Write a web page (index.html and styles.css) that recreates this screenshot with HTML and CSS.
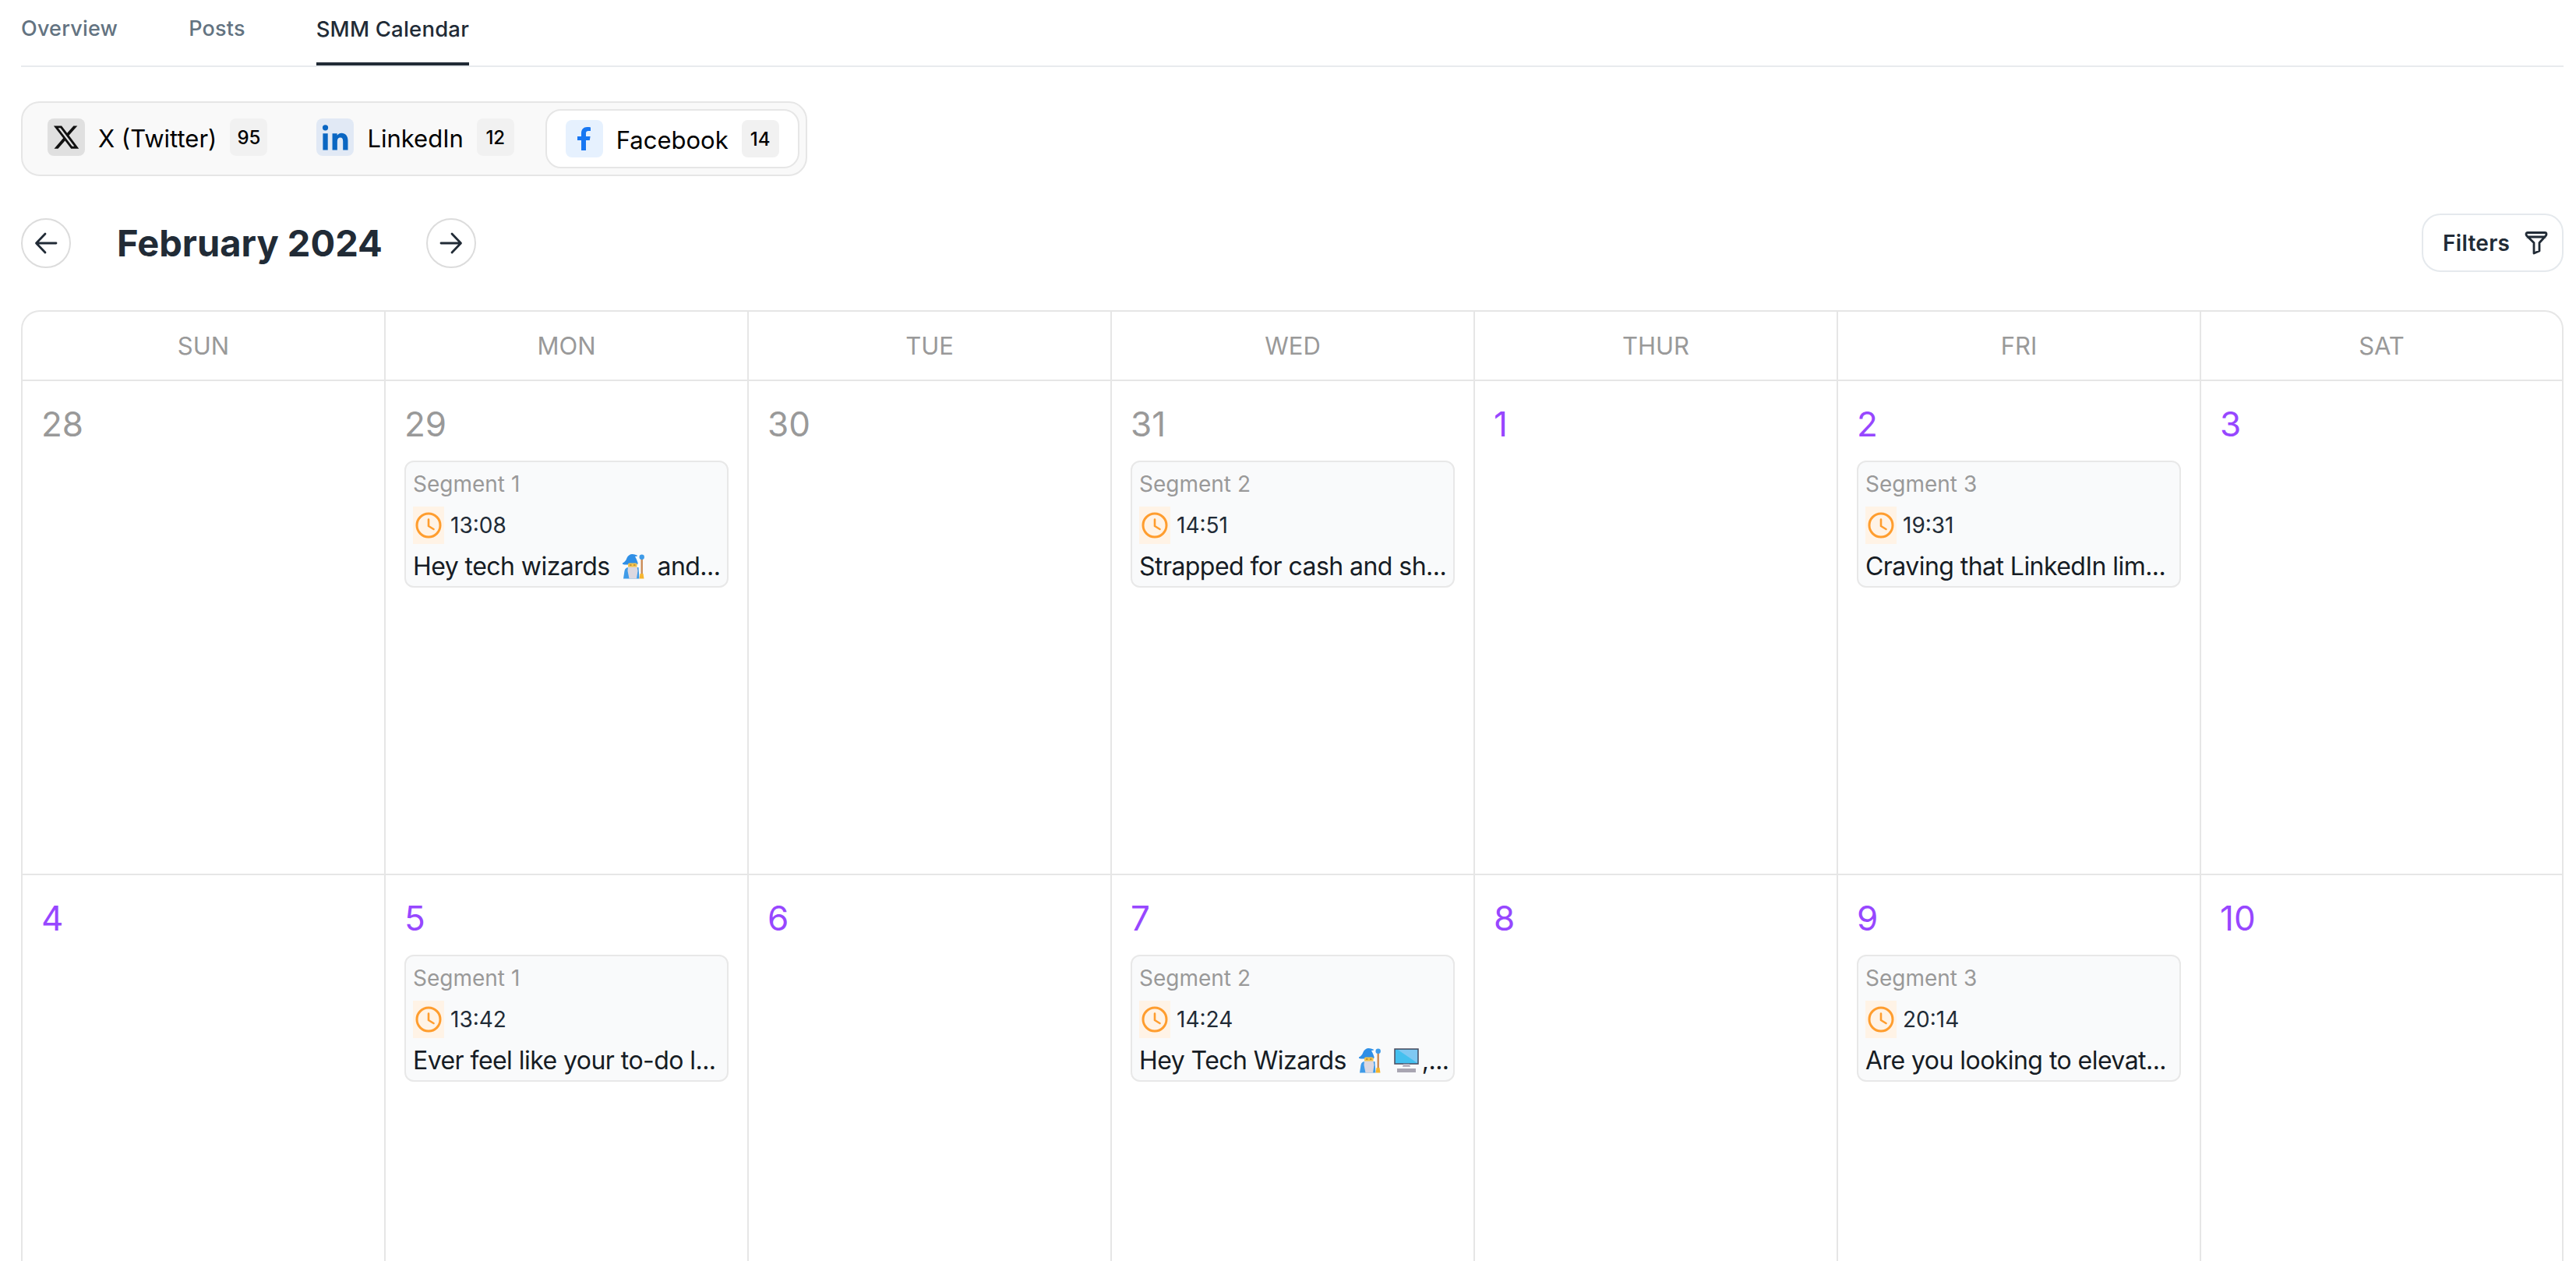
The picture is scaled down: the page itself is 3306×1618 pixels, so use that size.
FILE: index.html
```html
<!DOCTYPE html>
<html lang="en">
<head>
<meta charset="utf-8">
<title>SMM Calendar</title>
<link rel="stylesheet" href="styles.css">
</head>
<body>
<svg class="defs" width="0" height="0" aria-hidden="true">
  <symbol id="clock" viewBox="0 0 34 34"><circle cx="17" cy="17" r="15" fill="none" stroke="#ff9d2e" stroke-width="3"/><path d="M17 9.500V18l6.500 4" fill="none" stroke="#ff9d2e" stroke-width="2.600" stroke-linecap="round" stroke-linejoin="round"/></symbol>
  <symbol id="wizard" viewBox="0 0 28 32">
    <path d="M1 31.500l1.500-10c.5-3 2.500-4.500 5-4.500h13l1 14.500z" fill="#3f9be8"/>
    <path d="M0 11.500c2.500-1 4.500-3.500 5.500-6.500C6.500 2 9.500 0 12.500 0c2.500 0 4 1 6 1.500 1 .3.500 1.500-.5 1.300L16 3c1.500 2.500 2.500 5 3.500 8 .5 1.500-.5 2.500-2 2.500h-14C.5 13.500-1 12.500 0 11.500z" fill="#2f8fe6"/>
    <rect x="7" y="11.500" width="11.500" height="6" rx="1.500" fill="#f5c44e"/>
    <path d="M9 14h2.500M14 14h2.500" stroke="#8a6a30" stroke-width="1"/>
    <path d="M7 16.500h11.500l1 5-1.500 10H8.500l-2-10z" fill="#dcd8e0"/>
    <rect x="23.500" y="6" width="2.400" height="21" fill="#c98a55"/>
    <circle cx="24.700" cy="3.800" r="3.200" fill="#3f9be8"/>
    <path d="M22.500 25h4l1 6.500h-6z" fill="#f5b52e"/>
  </symbol>
  <symbol id="computer" viewBox="0 0 32 32">
    <rect x="1" y="1" width="30" height="19" fill="#44c0ef" stroke="#4a4a5e" stroke-width="1.500"/>
    <path d="M5 2l25 17V2z" fill="#7fc8f2"/>
    <path d="M12 20h8l1 4H11z" fill="#b9b5c2"/>
    <rect x="4" y="26" width="24" height="5" fill="#a9a6b2"/>
  </symbol>
</svg>

<nav class="tabs">
  <a class="tab">Overview</a>
  <a class="tab">Posts</a>
  <a class="tab tab-active">SMM Calendar</a>
</nav>

<div class="channels">
  <div class="channel">
    <span class="chan-icon chan-x"><svg width="36" height="36" viewBox="0 0 24 24"><path fill="#111" d="M18.244 2.250h3.308l-7.227 8.260 8.502 11.240H16.170l-5.214-6.817L4.990 21.750H1.680l7.730-8.835L1.254 2.250H8.080l4.713 6.231zm-1.161 17.520h1.833L7.084 4.126H5.117z"/></svg></span>
    <span class="chan-name">X (Twitter)</span>
    <span class="chan-count">95</span>
  </div>
  <div class="channel">
    <span class="chan-icon chan-in"><svg width="36" height="36" viewBox="0 0 24 24"><path fill="#0a66c2" d="M5.800 8.800H1.600V23h4.200zM3.700 1.500a2.400 2.400 0 1 0 0 4.800 2.400 2.400 0 0 0 0-4.800zM23 15c0-4.200-2.200-6.500-5.400-6.500-1.900 0-3.200 1-3.800 2V8.800H9.700V23h4.200v-7.400c0-1.900.9-3.200 2.600-3.200s2.300 1.200 2.300 3.200V23H23z"/></svg></span>
    <span class="chan-name">LinkedIn</span>
    <span class="chan-count">12</span>
  </div>
  <div class="channel channel-active">
    <span class="chan-icon chan-fb"><svg width="20" height="32" viewBox="0 0 20 32"><path fill="#1877f2" d="M6 31V18H1v-5h5V9c0-5 2.800-8 7.500-8 2 0 3.500.2 4.500.4v4.500h-2.800c-2.300 0-3.200 1.200-3.200 3.200V13h5.600l-.8 5H12v13z"/></svg></span>
    <span class="chan-name">Facebook</span>
    <span class="chan-count">14</span>
  </div>
</div>

<div class="toolbar">
  <button class="round-btn"><svg width="30" height="28" viewBox="0 0 30 28"><path d="M28 14H3M14 2 2.500 14 14 26" fill="none" stroke="#212b36" stroke-width="2.800" stroke-linecap="round" stroke-linejoin="round"/></svg></button>
  <h1 class="month">February 2024</h1>
  <button class="round-btn"><svg width="30" height="28" viewBox="0 0 30 28"><path d="M2 14h25M16 2l11.500 12L16 26" fill="none" stroke="#212b36" stroke-width="2.800" stroke-linecap="round" stroke-linejoin="round"/></svg></button>
  <button class="filters">Filters <svg width="32" height="32" viewBox="0 0 32 32"><path d="M3 4.500C3 3 4 2.500 5 2.500h22c1 0 2 .5 2 2 0 1-.3 1.500-1 2.300L20 15.500V26l-7 3V15.500L4 6.800c-.7-.8-1-1.300-1-2.300zM3.500 8h25" fill="none" stroke="#212b36" stroke-width="2.800" stroke-linejoin="round"/></svg></button>
</div>

<section class="calendar">
  <div class="head">SUN</div><div class="head">MON</div><div class="head">TUE</div><div class="head">WED</div><div class="head">THUR</div><div class="head">FRI</div><div class="head">SAT</div>

  <div class="day"><div class="num muted">28</div></div>
  <div class="day"><div class="num muted">29</div>
    <article class="post"><div class="seg">Segment 1</div><div class="time"><span class="clock"><svg width="34" height="34"><use href="#clock"/></svg></span>13:08</div><div class="text">Hey tech wizards <svg class="emoji" width="28" height="32"><use href="#wizard"/></svg> and...</div></article>
  </div>
  <div class="day"><div class="num muted">30</div></div>
  <div class="day"><div class="num muted">31</div>
    <article class="post"><div class="seg">Segment 2</div><div class="time"><span class="clock"><svg width="34" height="34"><use href="#clock"/></svg></span>14:51</div><div class="text">Strapped for cash and sh...</div></article>
  </div>
  <div class="day"><div class="num">1</div></div>
  <div class="day"><div class="num">2</div>
    <article class="post"><div class="seg">Segment 3</div><div class="time"><span class="clock"><svg width="34" height="34"><use href="#clock"/></svg></span>19:31</div><div class="text">Craving that LinkedIn lim...</div></article>
  </div>
  <div class="day"><div class="num">3</div></div>

  <div class="day"><div class="num">4</div></div>
  <div class="day"><div class="num">5</div>
    <article class="post"><div class="seg">Segment 1</div><div class="time"><span class="clock"><svg width="34" height="34"><use href="#clock"/></svg></span>13:42</div><div class="text">Ever feel like your to-do l...</div></article>
  </div>
  <div class="day"><div class="num">6</div></div>
  <div class="day"><div class="num">7</div>
    <article class="post"><div class="seg">Segment 2</div><div class="time"><span class="clock"><svg width="34" height="34"><use href="#clock"/></svg></span>14:24</div><div class="text">Hey Tech Wizards <svg class="emoji" width="28" height="32"><use href="#wizard"/></svg> <svg class="emoji-tight" width="32" height="32"><use href="#computer"/></svg>,...</div></article>
  </div>
  <div class="day"><div class="num">8</div></div>
  <div class="day"><div class="num">9</div>
    <article class="post"><div class="seg">Segment 3</div><div class="time"><span class="clock"><svg width="34" height="34"><use href="#clock"/></svg></span>20:14</div><div class="text">Are you looking to elevat...</div></article>
  </div>
  <div class="day"><div class="num">10</div></div>
</section>
</body>
</html>
```
FILE: styles.css
```css
* { box-sizing: border-box; }
html, body { height: 100%; }
body {
  margin: 0;
  padding: 0 16px 0 27px;
  background: #fff;
  font-family: Inter, "Liberation Sans", sans-serif;
  color: #161c24;
  overflow: hidden;
}
.defs { position: absolute; }

.tabs {
  display: flex;
  gap: 91px;
  height: 86px;
  border-bottom: 2px solid #e8ebee;
}
.tab {
  height: 84px;
  padding-top: 21px;
  font-size: 27px;
  line-height: 32px;
  font-weight: 500;
  letter-spacing: 0.2px;
  color: #637381;
}
.tab-active {
  font-size: 27.500px;
  color: #212b36;
  border-bottom: 4px solid #212b36;
}

.channels {
  display: inline-flex;
  align-items: center;
  margin-top: 44px;
  height: 96px;
  padding: 0 8px 0 32px;
  background: #f9f9f9;
  border: 2px solid #e6e6e6;
  border-radius: 24px;
}
.channel {
  display: flex;
  align-items: center;
  height: 76px;
  margin-right: 63px;
  margin-bottom: 4px;
}
.channel:nth-child(2) { margin-right: 40px; }
.channel-active {
  margin: 0;
  padding: 0 24px;
  background: #fff;
  border: 2px solid #e6e6e6;
  border-radius: 20px;
}
.chan-icon {
  display: flex;
  align-items: center;
  justify-content: center;
  width: 48px;
  height: 48px;
  border-radius: 8px;
}
.chan-x { background: #e0e0e0; }
.chan-in { background: #e1e9f5; }
.chan-fb { background: #e6f1fe; }
.chan-name {
  margin: 0 17px;
  padding-top: 3px;
  font-size: 31px;
  line-height: 40px;
  color: #000;
}
.chan-count {
  display: flex;
  align-items: center;
  justify-content: center;
  width: 48px;
  height: 48px;
  border-radius: 8px;
  background: #f1f1f1;
  font-size: 24px;
  font-weight: 500;
  color: #000;
}

.toolbar {
  display: flex;
  align-items: center;
  height: 75px;
  margin-top: 48px;
}
.round-btn {
  display: flex;
  align-items: center;
  justify-content: center;
  width: 64px;
  height: 64px;
  padding: 0;
  background: #fff;
  border: 2px solid #dcdcdc;
  border-radius: 50%;
}
.month {
  margin: 0 56px 0 59px;
  font-size: 47px;
  line-height: 60px;
  font-weight: 700;
  color: #212b36;
}
.filters {
  display: flex;
  align-items: center;
  gap: 18px;
  margin-left: auto;
  width: 182px;
  height: 75px;
  padding: 0 0 0 25px;
  background: #fff;
  border: 2px solid #e5e9ed;
  border-radius: 24px;
  font: 600 28px Inter, "Liberation Sans", sans-serif;
  letter-spacing: 0.3px;
  color: #212b36;
}

.calendar {
  display: grid;
  grid-template-columns: repeat(6, 466px) 1fr;
  grid-template-rows: 89px 634px 634px;
  margin-top: 49px;
  border: 2px solid #e6e6e6;
  border-bottom: 0;
  border-radius: 24px 24px 0 0;
}
.head {
  display: flex;
  align-items: center;
  justify-content: center;
  border-right: 2px solid #e6e6e6;
  border-bottom: 2px solid #e6e6e6;
  font-size: 31px;
  color: #999;
}
.day {
  min-width: 0;
  padding: 29px 24px 0;
  border-right: 2px solid #e6e6e6;
  border-bottom: 2px solid #e6e6e6;
}
.head:nth-child(7n), .day:nth-child(7n) { border-right: 0; }
.num {
  font-size: 44px;
  line-height: 52px;
  color: #9747ff;
}
.num.muted { color: #999; }

.post {
  height: 163px;
  margin-top: 21px;
  padding: 12px 9px 0;
  background: #f9fafb;
  border: 2px solid #e8e8e8;
  border-radius: 12px;
}
.seg {
  font-size: 28px;
  line-height: 32px;
  color: #999;
}
.time {
  display: flex;
  align-items: center;
  gap: 8px;
  margin-top: 13px;
  height: 48px;
  font-size: 28px;
  color: #212b36;
}
.clock {
  display: flex;
  align-items: center;
  justify-content: center;
  width: 40px;
  height: 48px;
  background: #fff3e6;
}
.text {
  margin-top: 7px;
  font-size: 32px;
  line-height: 44px;
  letter-spacing: -0.55px;
  white-space: nowrap;
  color: #161c24;
}
.emoji { vertical-align: -5px; margin: 0 8px; }
.emoji-tight { vertical-align: -5px; margin-right: 4px; }
```
